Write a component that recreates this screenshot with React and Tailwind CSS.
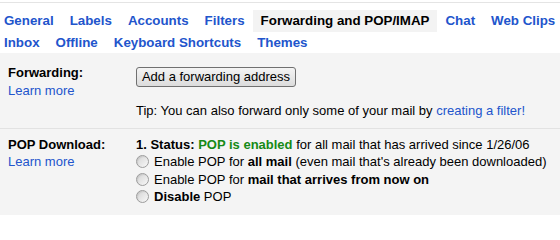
export default function App() {
  const rowOne = ['General', 'Labels', 'Accounts', 'Filters', 'Forwarding and POP/IMAP', 'Chat', 'Web Clips']
  const rowTwo = ['Inbox', 'Offline', 'Keyboard Shortcuts', 'Themes']
  const active = 'Forwarding and POP/IMAP'

  const Tab = ({ label }) => (
    <span
      className={
        label === active
          ? 'px-2 h-[22px] leading-[22px] bg-[#f3f3f3] text-black font-bold whitespace-nowrap'
          : 'px-2 h-[22px] leading-[22px] text-[#2255cc] font-bold whitespace-nowrap cursor-pointer'
      }
    >
      {label}
    </span>
  )

  const Radio = ({ children }) => (
    <label className="flex items-center gap-[5px] h-[17.5px] leading-[17.5px]">
      <span className="w-[13px] h-[13px] rounded-full border border-[#9c9c9c] bg-gradient-to-br from-[#d4d4d4] to-[#f8f8f8] shadow-[inset_1px_1px_1px_rgba(0,0,0,0.08)]" />
      <span>{children}</span>
    </label>
  )

  return (
    <div className="w-[560px] h-[215px] overflow-hidden flex flex-col bg-white text-[13px] text-black font-['Liberation_Sans',Arial,sans-serif]">
      <div className="mt-[2px] border-t border-[#e4e4e4] pt-[7px] text-[13.33px]">
        <div className="flex -ml-1">
          {rowOne.map((t) => (
            <Tab key={t} label={t} />
          ))}
        </div>
        <div className="flex -ml-1 h-[21px]">
          {rowTwo.map((t) => (
            <Tab key={t} label={t} />
          ))}
        </div>
      </div>

      <div className="bg-[#f4f4f4] flex-1">
        {/* forwarding */}
        <div className="grid grid-cols-[128px_1fr] pl-2 pt-[11px] pb-2 border-b border-[#e2e2e2]">
          <div className="leading-[18px]">
            <div className="font-bold">Forwarding:</div>
            <a className="text-[#2255cc]">Learn more</a>
          </div>
          <div className="leading-[18px]">
            <button className="mt-[3px] w-[160px] h-[20px] leading-[18px] rounded-[3px] border border-[#707070] bg-gradient-to-b from-[#f4f4f4] to-[#dcdcdc] text-[13px]">
              Add a forwarding address
            </button>
            <div className="mt-[15px] whitespace-nowrap">
              Tip: You can also forward only some of your mail by{' '}
              <a className="text-[#2255cc]">creating a filter!</a>
            </div>
          </div>
        </div>

        {/* pop */}
        <div className="grid grid-cols-[128px_1fr] pl-2 pt-[7px]">
          <div className="leading-[17px]">
            <div className="font-bold">POP Download:</div>
            <a className="text-[#2255cc]">Learn more</a>
          </div>
          <div className="whitespace-nowrap">
            <div className="leading-[17px]">
              <b>1. Status: </b>
              <b className="text-[#168a16]">POP is enabled</b> for all mail that has arrived since 1/26/06
            </div>
            <Radio>
              Enable POP for <b>all mail</b> (even mail that's already been downloaded)
            </Radio>
            <Radio>
              Enable POP for <b>mail that arrives from now on</b>
            </Radio>
            <Radio>
              <b>Disable</b> POP
            </Radio>
          </div>
        </div>
      </div>
    </div>
  )
}
